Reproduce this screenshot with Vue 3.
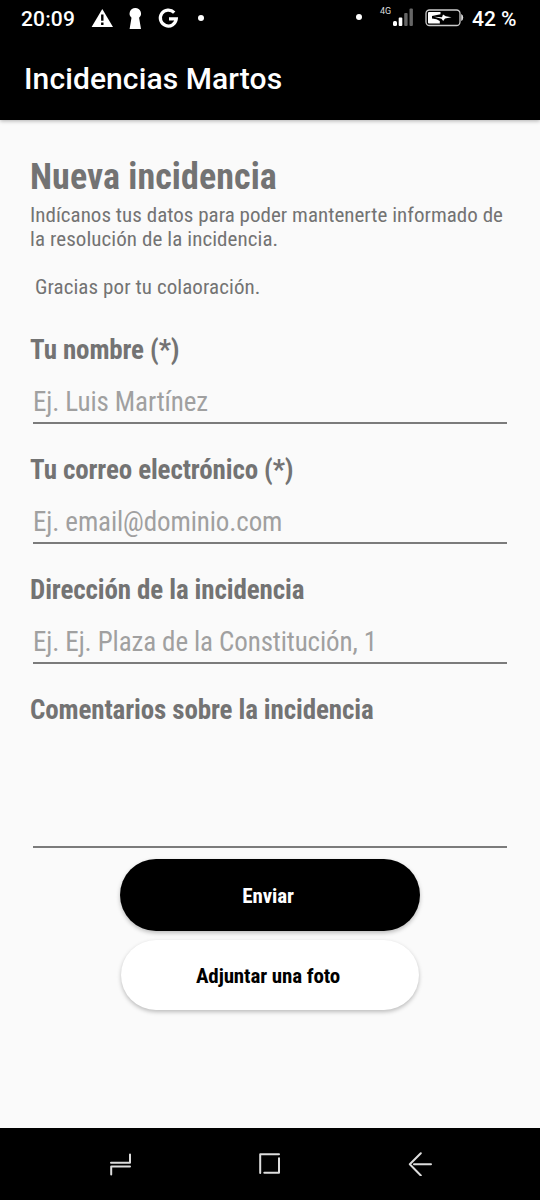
<template>
  <div class="screen">
    <div class="status-bar">
      <span class="time">20:09</span>
      <svg class="status-icons" width="120" height="36" viewBox="0 0 120 36">
        <path d="M22.3 9 L33 27 H11.6 Z" fill="#fff" />
        <path d="M22.3 14.5 V20.8 M22.3 22.4 V25" stroke="#000" stroke-width="2.4" />
        <path d="M55.3 8 a5.6 5.6 0 0 1 3.8 9.8 L61 29 H49.6 L51.5 17.8 A5.6 5.6 0 0 1 55.3 8 Z" fill="#fff" />
        <path d="M94.2 12.6 A8 8 0 1 0 96.3 18.9 H89" fill="none" stroke="#fff" stroke-width="3.2" />
        <circle cx="121" cy="18" r="3" fill="#fff" />
      </svg>
      <svg class="status-icons right" width="116" height="36" viewBox="0 0 116 36">
        <circle cx="9" cy="17" r="3" fill="#fff" />
        <text x="30" y="14" class="net">4G</text>
        <g fill="#fff">
          <rect x="43" y="21" width="4" height="5" rx="1.5" />
          <rect x="48.7" y="17.5" width="3.6" height="8.5" rx="1" />
        </g>
        <g fill="#666">
          <rect x="54.2" y="13" width="3.4" height="13" rx="1" />
          <rect x="59.5" y="8.5" width="3.4" height="17.5" rx="1" />
        </g>
        <rect x="76" y="10" width="34" height="15.5" rx="3.5" fill="none" stroke="#ccc" stroke-width="1.3" />
        <path d="M111.2 14 q2 .5 2 3.5 t-2 3.5 Z" fill="#ddd" />
        <path d="M79 12 H90.5 V14.3 L82 16 V18.5 L86.5 19.3 L89.8 21 V23.5 H79 Q78 23.5 78 22.5 V13 Q78 12 79 12 Z" fill="#fff" />
        <path d="M84 16.8 L92 17.3 L93 14.4 L95.8 16.3 L101.5 17.2 L95 18.6 L93.2 21 L91.5 18.8 Z" fill="#fff" />
      </svg>
      <span class="battery">42 %</span>
    </div>
    <header class="app-bar"><span>Incidencias Martos</span></header>

    <main class="content">
      <h1>Nueva incidencia</h1>
      <p class="intro">Indícanos tus datos para poder mantenerte informado de<br>la resolución de la incidencia.</p>
      <p class="thanks">Gracias por tu colaoración.</p>
      <div v-for="f in fields" :key="f.label" class="field" :class="{ tall: f.multiline }">
        <label>{{ f.label }}</label>
        <input v-if="!f.multiline" v-model="f.value" type="text" :placeholder="f.hint">
        <textarea v-else v-model="f.value"></textarea>
      </div>
      <div class="actions">
        <button class="btn btn-primary">Enviar</button>
        <button class="btn btn-light">Adjuntar una foto</button>
      </div>
    </main>

    <nav class="nav-bar">
      <svg width="24" height="24" viewBox="0 0 24 24"><path d="M3 10.7 H22 V2.5 M22 14.5 H3.2 V22.5" /></svg>
      <svg width="24" height="24" viewBox="0 0 24 24"><path d="M2.2 21 V2.2 H21 M21 6.3 V20.8 H6.3" /></svg>
      <svg width="24" height="24" viewBox="0 0 24 24"><path d="M12.8 1.3 L1.8 12.3 L12.8 23.5 M6 12.3 H23" /></svg>
    </nav>
  </div>
</template>

<script setup>
import { ref } from 'vue'

const fields = ref([
  { label: 'Tu nombre (*)', hint: 'Ej. Luis Martínez', value: '' },
  { label: 'Tu correo electrónico (*)', hint: 'Ej. email@dominio.com', value: '' },
  { label: 'Dirección de la incidencia', hint: 'Ej. Ej. Plaza de la Constitución, 1', value: '' },
  { label: 'Comentarios sobre la incidencia', value: '', multiline: true }
])
</script>

<style>
body { margin: 0; background: #fafafa; }
</style>

<style scoped>
* { box-sizing: border-box; }
.screen {
  width: 540px; height: 1200px; display: flex; flex-direction: column;
  background: #fafafa; color: #737373; font-family: Roboto, sans-serif; overflow: hidden;
}
.status-bar {
  height: 36px; background: #000; color: #fff; display: flex; align-items: center;
  padding: 0 23px 0 21px; font-size: 21px; font-weight: 500; line-height: 36px; flex: none;
}
.time { width: 59px; padding-top: 2px; letter-spacing: .15px; }
.battery { padding-top: 2px; margin-left: 6px; white-space: nowrap; }
.status-icons { flex: none; overflow: visible; }
.right { margin-left: 150px; }
.net { font-size: 9px; font-weight: 400; fill: #ddd; }
.app-bar {
  height: 84px; flex: none; background: #000; color: #fff; padding: 0 24px;
  font-size: 30px; font-weight: 500; line-height: 85px; letter-spacing: .1px;
  box-shadow: 0 1px 4px rgba(0, 0, 0, .3);
}
.content {
  flex: 1; padding: 36px 30px 0; font-family: "Roboto Condensed", Roboto, sans-serif;
  font-stretch: 75%;
}
h1 { margin: 0; font-size: 36px; font-weight: 700; line-height: 42px; letter-spacing: .07px; }
p {
  margin: 0; font-size: 21px; line-height: 24px; font-weight: 400;
  letter-spacing: .08px; white-space: nowrap;
}
.intro { margin-top: 5px; }
.intro::first-line { letter-spacing: .02px; }
.thanks { margin: 24px 0 32px 5px; }
.field { display: flex; flex-direction: column; height: 120px; }
.field.tall { height: 157px; }
label {
  font-size: 27px; font-weight: 700; line-height: 38px; height: 44px;
  letter-spacing: -.12px; white-space: nowrap;
}
input, textarea {
  margin: 0 3px; padding: 6px 0 0; height: 49px; border: 0; border-bottom: 2px solid #7b7b7b; border-radius: 0;
  background: none; outline: none; font: inherit; font-stretch: 75%; font-size: 27px; font-weight: 400;
  letter-spacing: -.11px; color: #333;
}
textarea { height: 113px; resize: none; }
input::placeholder { color: #a0a0a0; opacity: 1; }
.actions { display: flex; flex-direction: column; align-items: center; gap: 9px; margin-top: 11px; }
.btn {
  width: 300px; height: 72px; border: 0; border-radius: 36px; padding: 2px 4px 0 0;
  font: inherit; font-stretch: 75%; font-size: 21px; font-weight: 700; letter-spacing: -.12px;
  box-shadow: 0 2px 4px rgba(0, 0, 0, .25);
}
.btn-primary { background: #000; color: #fff; }
.btn-light { background: #fff; color: #000; width: 298px; height: 70px; }
.nav-bar {
  height: 72px; flex: none; background: #000; display: flex; justify-content: space-between;
  align-items: center; padding: 0 108px;
}
.nav-bar path { fill: none; stroke: #ddd; stroke-width: 2; stroke-linecap: round; stroke-linejoin: round; }
</style>
